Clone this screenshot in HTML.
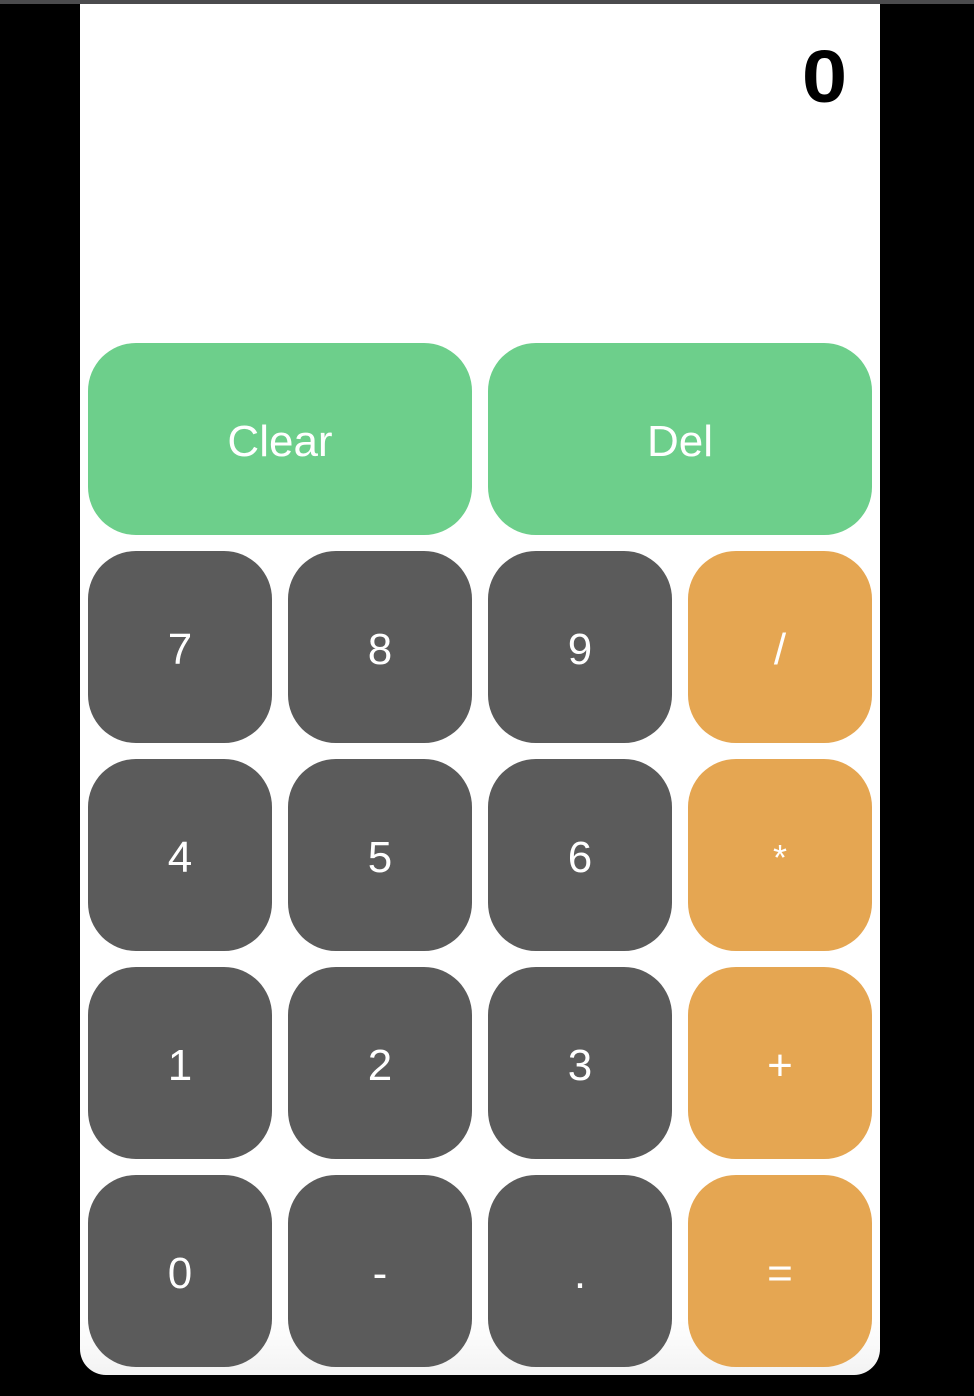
<!DOCTYPE html>
<html><head><meta charset="utf-8"><style>
html,body{margin:0;padding:0;background:#000;width:974px;height:1396px;overflow:hidden;font-family:"Liberation Sans",Helvetica,Arial,sans-serif}
.top{position:absolute;left:0;top:0;width:974px;height:4px;background:#4b4b4d}
.panel{position:absolute;left:80px;top:4px;width:800px;height:1371px;background:linear-gradient(#fff 96%,#f3f3f3);border-radius:0 0 26px 26px}
.disp{position:absolute;right:33px;top:30px;font-size:74px;font-weight:bold;color:#000;transform:scaleX(1.1);transform-origin:right}
.b{position:absolute;width:184px;height:192px;border-radius:48px;background:#5b5b5b;color:#fff;font-size:44px;display:flex;align-items:center;justify-content:center;box-sizing:border-box;padding-top:6px}
.g{background:#6dcf8b;width:384px}
.o{background:#e5a652}
</style></head><body>
<div class="top"></div>
<div class="panel"><div class="disp">0</div></div>
<div class="b g" style="left:88px;top:343px">Clear</div>
<div class="b g" style="left:488px;top:343px">Del</div>
<div class="b" style="left:88px;top:551px">7</div>
<div class="b" style="left:288px;top:551px">8</div>
<div class="b" style="left:488px;top:551px">9</div>
<div class="b o" style="left:688px;top:551px">/</div>
<div class="b" style="left:88px;top:759px">4</div>
<div class="b" style="left:288px;top:759px">5</div>
<div class="b" style="left:488px;top:759px">6</div>
<div class="b o" style="left:688px;top:759px;font-size:36px">*</div>
<div class="b" style="left:88px;top:967px">1</div>
<div class="b" style="left:288px;top:967px">2</div>
<div class="b" style="left:488px;top:967px">3</div>
<div class="b o" style="left:688px;top:967px">+</div>
<div class="b" style="left:88px;top:1175px">0</div>
<div class="b" style="left:288px;top:1175px">-</div>
<div class="b" style="left:488px;top:1175px">.</div>
<div class="b o" style="left:688px;top:1175px">=</div>
</body></html>
